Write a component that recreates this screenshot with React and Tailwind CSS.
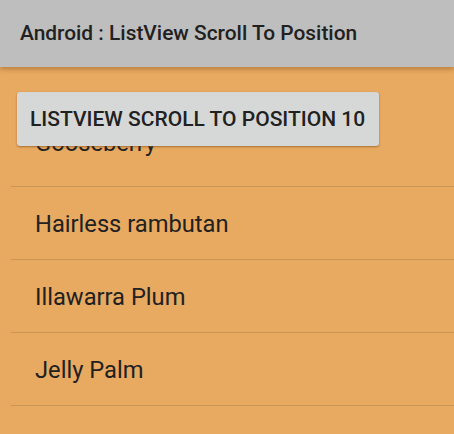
const fruits = ['Gooseberry', 'Hairless rambutan', 'Illawarra Plum', 'Jelly Palm'];

export default function App() {
  return (
    <div className="w-[454px] h-[434px] overflow-hidden bg-[#e8a961] flex flex-col font-['Roboto',sans-serif]">
      {/* App bar */}
      <div className="relative z-10 h-[67px] shrink-0 bg-[#bebebe] flex items-center px-5 shadow-[0_2px_5px_rgba(120,70,20,0.45)]">
        <h1 className="text-[20.9px] font-medium text-[#212121]">Android : ListView Scroll To Position</h1>
      </div>

      {/* Button */}
      <div className="relative z-10 pt-[25px] pl-[17px] shrink-0">
        <button className="block w-[362px] h-[54px] rounded-[3px] bg-[#d6d8d7] shadow-[0_1px_2px_rgba(120,70,20,0.6)] text-[21px] font-medium text-[#212121] text-left pl-[13px] pt-[2px]">
          LISTVIEW SCROLL TO POSITION 10
        </button>
      </div>

      {/* List */}
      <div className="relative flex-1 ml-[11px] overflow-hidden">
        <div className="-mt-[32px]">
          {fruits.map((f, i) => (
            <div
              key={f}
              className={`h-[73px] flex items-center pl-6 border-b border-[#c99658] text-[23.7px] text-[#212121] ${i === 0 ? 'pb-[12px]' : 'pt-[3px]'}`}
            >
              {f}
            </div>
          ))}
        </div>
      </div>
    </div>
  );
}
